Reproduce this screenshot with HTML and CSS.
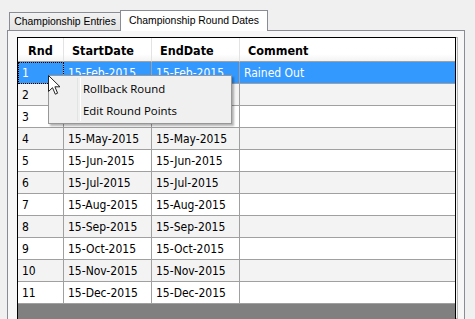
FILE: index.html
```html
<!DOCTYPE html>
<html lang="en">
<head>
<meta charset="UTF-8" />
<title>Championship Round Dates</title>
<link rel="stylesheet" href="styles.css">
</head>
<body>

<div class="tabs">
  <div class="tab">Championship Entries</div>
  <div class="tab active">Championship Round Dates</div>
</div>

<section class="panel">
  <div class="grid">
    <table>
      <thead>
        <tr>
          <th class="c-rnd">Rnd</th>
          <th class="c-date">StartDate</th>
          <th class="c-date">EndDate</th>
          <th class="c-comment">Comment</th>
        </tr>
      </thead>
      <tbody>
        <tr class="selected"><td class="focus">1</td><td>15-Feb-2015</td><td>15-Feb-2015</td><td>Rained Out</td></tr>
        <tr><td>2</td><td>15-Mar-2015</td><td>15-Mar-2015</td><td></td></tr>
        <tr><td>3</td><td>15-Apr-2015</td><td>15-Apr-2015</td><td></td></tr>
        <tr><td>4</td><td>15-May-2015</td><td>15-May-2015</td><td></td></tr>
        <tr><td>5</td><td>15-Jun-2015</td><td>15-Jun-2015</td><td></td></tr>
        <tr><td>6</td><td>15-Jul-2015</td><td>15-Jul-2015</td><td></td></tr>
        <tr><td>7</td><td>15-Aug-2015</td><td>15-Aug-2015</td><td></td></tr>
        <tr><td>8</td><td>15-Sep-2015</td><td>15-Sep-2015</td><td></td></tr>
        <tr><td>9</td><td>15-Oct-2015</td><td>15-Oct-2015</td><td></td></tr>
        <tr><td>10</td><td>15-Nov-2015</td><td>15-Nov-2015</td><td></td></tr>
        <tr><td>11</td><td>15-Dec-2015</td><td>15-Dec-2015</td><td></td></tr>
      </tbody>
    </table>
  </div>
</section>

<ul class="menu">
  <li>Rollback Round</li>
  <li>Edit Round Points</li>
</ul>

<svg class="cursor" width="14" height="22" viewBox="0 0 14 22">
  <path d="M0.5 0.5 L0.5 16.5 L4.5 12.7 L7.3 19.2 L9.6 18.2 L6.9 11.8 L12 11.8 Z" fill="#fff" stroke="#222" stroke-width="1" stroke-linejoin="miter"/>
</svg>

</body>
</html>
```

FILE: styles.css
```css
* {
  box-sizing: border-box;
}
body {
  margin: 0;
  height: 319px;
  overflow: hidden;
  background: #f0f0f0;
  font-family: "Liberation Sans", Arial, sans-serif;
  color: #000;
  position: relative;
}

/* tab strip */
.tabs {
  height: 30px;
  padding-left: 9px;
  display: flex;
  align-items: flex-end;
}
.tab {
  height: 18px;
  width: 111px;
  border: 1px solid #898c95;
  border-right: none;
  border-bottom: none;
  background: linear-gradient(#f2f2f2, #e3e3e3);
  font-size: 10.4px;
  line-height: 17px;
  text-align: center;
  white-space: nowrap;
}
.tab.active {
  position: relative;
  z-index: 1;
  width: 148px;
  height: 21px;
  margin-bottom: -1px;
  border-right: 1px solid #898c95;
  background: #fff;
  line-height: 19px;
}

/* tab page */
.panel {
  margin-left: 7px;
  width: 458px;
  height: 289px;
  border: 1px solid #898c95;
  border-bottom: none;
  background: #f7f7f7;
  padding: 6px 0 0 9px;
}
.grid {
  width: 439px;
  height: 282px;
  border: 1px solid #000;
  border-bottom: none;
  background: #808080;
  box-shadow: 2px 0 0 -1px #f7f7f7, 2px 0 0 0 #b4b4b4;
  font-family: "DejaVu Sans Condensed", "DejaVu Sans", sans-serif;
  font-stretch: condensed;
  font-size: 12px;
}
table {
  width: 437px;
  table-layout: fixed;
  border-collapse: separate;
  border-spacing: 0;
}
th, td {
  padding: 0 0 0 4px;
  text-align: left;
  white-space: nowrap;
  overflow: hidden;
}
th {
  height: 24px;
  padding-left: 8px;
  padding-top: 1px;
  font-size: 12.5px;
  font-weight: bold;
  background: linear-gradient(#fff 70%, #f3f3f3);
  border-right: 1px solid #e3e3e3;
  border-bottom: 1px solid #a0a0a0;
}
th.c-rnd { width: 46px; padding-left: 10px; }
th.c-date { width: 88px; }
th.c-comment { width: 215px; border-right: none; }

td {
  height: 22px;
  border-right: 1px solid #a0a0a0;
  border-bottom: 1px solid #a0a0a0;
  background: #fff;
}
td:last-child {
  border-right: none;
}
tbody tr:nth-child(even) td {
  background: #f3f3f3;
}
tr.selected td {
  background: #3399ff;
  color: #fff;
}
td.focus {
  outline: 1px dotted #000;
  outline-offset: -1px;
}

/* context menu */
.menu {
  position: absolute;
  left: 48px;
  top: 75px;
  width: 184px;
  height: 49px;
  margin: 0;
  padding: 2px;
  list-style: none;
  background: #f0f0f0;
  border: 1px solid #979797;
  box-shadow: 2px 2px 2px rgba(0,0,0,0.3);
  font-family: "Open Sans", sans-serif;
  font-size: 11.4px;
}
.menu::before {
  content: "";
  position: absolute;
  left: 28px;
  top: 2px;
  bottom: 2px;
  width: 2px;
  border-left: 1px solid #e2e3e3;
  border-right: 1px solid #fff;
}
.menu li {
  height: 22px;
  line-height: 22px;
  padding-left: 32px;
}

.cursor {
  position: absolute;
  left: 48px;
  top: 75px;
}
```
